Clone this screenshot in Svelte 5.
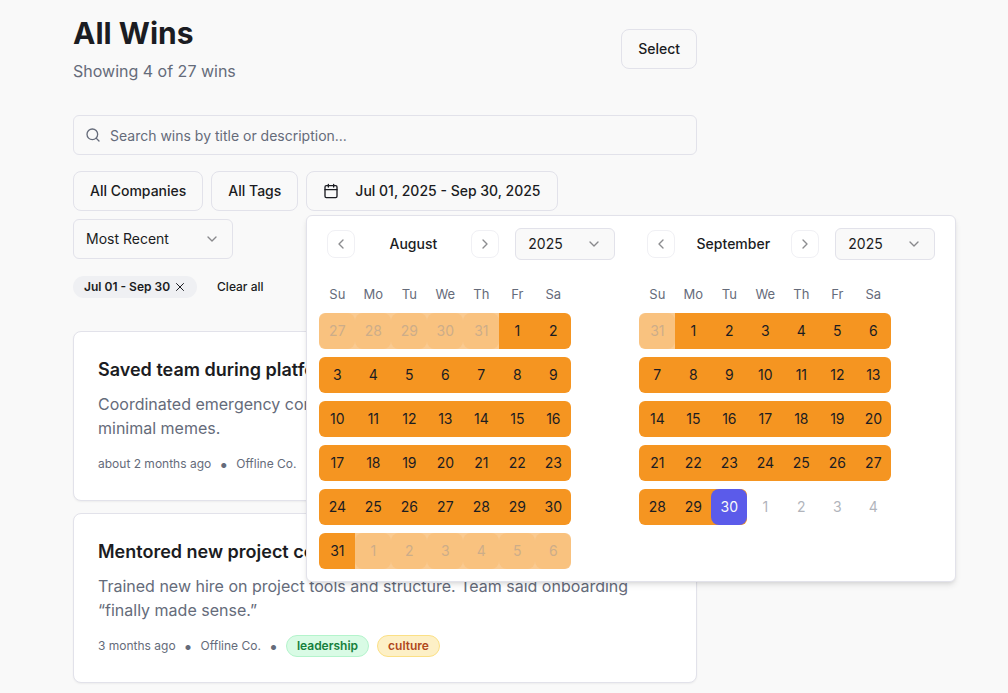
<script>
  const weekdays = ["Su", "Mo", "Tu", "We", "Th", "Fr", "Sa"];
  const sortOptions = ["Most Recent", "Oldest First", "By Company"];
  const years = [2023, 2024, 2025];

  const rangeStart = new Date(2025, 6, 1);
  const rangeEnd = new Date(2025, 8, 30);

  let search = $state("");
  let sort = $state("Most Recent");
  let months = $state([
    { name: "August", index: 7, year: 2025 },
    { name: "September", index: 8, year: 2025 },
  ]);

  const wins = [
    {
      title: "Saved team during platform outage",
      description:
        "Coordinated emergency comms and kept everyone on the track with minimal memes.",
      date: "about 2 months ago",
      company: "Offline Co.",
      tags: [],
    },
    {
      title: "Mentored new project coordinator",
      description:
        "Trained new hire on project tools and structure. Team said onboarding “finally made sense.”",
      date: "3 months ago",
      company: "Offline Co.",
      tags: [
        { label: "leadership", color: "green" },
        { label: "culture", color: "amber" },
      ],
    },
  ];

  function buildWeeks(year, month) {
    const first = new Date(year, month, 1);
    const lastDay = new Date(year, month + 1, 0).getDate();
    const offset = first.getDay();
    const rows = Math.ceil((offset + lastDay) / 7);
    return Array.from({ length: rows }, (_, r) =>
      Array.from({ length: 7 }, (_, c) => {
        const date = new Date(year, month, 1 - offset + r * 7 + c);
        return {
          day: date.getDate(),
          outside: date.getMonth() !== month,
          selected: date >= rangeStart && date <= rangeEnd,
          end: date.getTime() === rangeEnd.getTime(),
        };
      })
    );
  }
</script>

{#snippet chevronDown()}
  <svg class="icon chevron" viewBox="0 0 24 24" aria-hidden="true"><path d="m6 9 6 6 6-6" /></svg>
{/snippet}

<main class="page">
  <header class="header">
    <div>
      <h1>All Wins</h1>
      <p class="subtitle">Showing 4 of 27 wins</p>
    </div>
    <button class="btn" type="button">Select</button>
  </header>

  <label class="search">
    <svg class="icon" viewBox="0 0 24 24" aria-hidden="true">
      <circle cx="11" cy="11" r="8" />
      <path d="m21 21-4.3-4.3" />
    </svg>
    <input
      type="text"
      aria-label="Search wins"
      placeholder="Search wins by title or description..."
      bind:value={search}
    />
  </label>

  <div class="filters">
    <button class="btn" type="button">All Companies</button>
    <button class="btn" type="button">All Tags</button>
    <div class="date-filter">
      <button class="btn date-btn" type="button" aria-expanded="true">
        <svg class="icon" viewBox="0 0 24 24" aria-hidden="true">
          <path d="M8 2v4M16 2v4M3 10h18" />
          <rect width="18" height="18" x="3" y="4" rx="2" />
        </svg>
        Jul 01, 2025 - Sep 30, 2025
      </button>

      <div class="popover" role="dialog" aria-label="Date range">
        {#each months as month}
          <div class="month">
            <div class="caption">
              <button class="nav" type="button" aria-label="Previous month">
                <svg class="icon" viewBox="0 0 24 24" aria-hidden="true"><path d="m15 18-6-6 6-6" /></svg>
              </button>
              <span class="month-name">{month.name}</span>
              <button class="nav" type="button" aria-label="Next month">
                <svg class="icon" viewBox="0 0 24 24" aria-hidden="true"><path d="m9 18 6-6-6-6" /></svg>
              </button>
              <div class="select year">
                <select aria-label="Year for {month.name}" bind:value={month.year}>
                  {#each years as year}
                    <option value={year}>{year}</option>
                  {/each}
                </select>
                {@render chevronDown()}
              </div>
            </div>

            <table>
              <thead>
                <tr>
                  {#each weekdays as weekday}
                    <th scope="col">{weekday}</th>
                  {/each}
                </tr>
              </thead>
              <tbody>
                {#each buildWeeks(month.year, month.index) as week}
                  <tr>
                    {#each week as cell}
                      <td
                        class:selected={cell.selected}
                        class:outside={cell.outside}
                        class:end={cell.end}
                      >
                        <button type="button">{cell.day}</button>
                      </td>
                    {/each}
                  </tr>
                {/each}
              </tbody>
            </table>
          </div>
        {/each}
      </div>
    </div>

    <div class="select sort">
      <select aria-label="Sort wins" bind:value={sort}>
        {#each sortOptions as option}
          <option>{option}</option>
        {/each}
      </select>
      {@render chevronDown()}
    </div>
  </div>

  <div class="active-filters">
    <span class="chip">
      Jul 01 - Sep 30
      <button type="button" aria-label="Remove date filter">
        <svg class="icon" viewBox="0 0 24 24" aria-hidden="true"><path d="M19 5 5 19M5 5l14 14" /></svg>
      </button>
    </span>
    <button class="clear" type="button">Clear all</button>
  </div>

  <section class="wins">
    {#each wins as win}
      <article class="card">
        <h2>{win.title}</h2>
        <p class="description">{win.description}</p>
        <div class="meta">
          <span>{win.date}</span>
          <span class="dot">•</span>
          <span>{win.company}</span>
          {#if win.tags.length}
            <span class="dot">•</span>
            {#each win.tags as tag}
              <span class="tag {tag.color}">{tag.label}</span>
            {/each}
          {/if}
        </div>
      </article>
    {/each}
  </section>
</main>

<style>
  :global(body) {
    background: #f9f9f9;
    color: #1b1c22;
    font-family: Inter, "Liberation Sans", sans-serif;
    font-size: 14px;
    line-height: 20px;
  }

  * {
    box-sizing: border-box;
  }

  h1,
  h2,
  p {
    margin: 0;
  }

  button,
  input,
  select {
    margin: 0;
    padding: 0;
    border: 0;
    background: none;
    color: inherit;
    font: inherit;
  }

  .icon {
    width: 16px;
    height: 16px;
    flex: none;
    fill: none;
    stroke: currentColor;
    stroke-width: 2;
    stroke-linecap: round;
    stroke-linejoin: round;
  }

  .page {
    max-width: 624px;
    margin-left: 73px;
    padding: 15px 0 10px;
  }

  .header {
    display: flex;
    align-items: center;
    justify-content: space-between;
    margin-bottom: 32px;
  }

  h1 {
    font-size: 30px;
    line-height: 36px;
    font-weight: 700;
  }

  .subtitle {
    margin-top: 8px;
    font-size: 16px;
    line-height: 24px;
    color: #656b7a;
  }

  .btn {
    display: inline-flex;
    align-items: center;
    height: 40px;
    padding: 0 16px;
    border: 1px solid #e2e2ea;
    border-radius: 8px;
    background: #f9f9f9;
    font-weight: 500;
    white-space: nowrap;
  }

  .search {
    display: flex;
    align-items: center;
    gap: 9px;
    height: 40px;
    padding: 0 11px;
    border: 1px solid #e2e2ea;
    border-radius: 6px;
    color: #656b7a;
  }

  .search input {
    flex: 1;
    min-width: 0;
    height: 100%;
    outline: none;
  }

  .search input::placeholder {
    color: #656b7a;
    opacity: 1;
  }

  .filters {
    display: flex;
    flex-wrap: wrap;
    gap: 8px;
    margin-top: 16px;
  }

  .date-filter {
    position: relative;
  }

  .date-btn {
    gap: 16px;
  }

  .select {
    display: grid;
    align-items: center;
  }

  .select select {
    grid-area: 1 / 1;
    width: 100%;
    height: 100%;
    padding: 0 12px;
    border: 1px solid #e2e2ea;
    border-radius: 6px;
    background: #f9f9f9;
    appearance: none;
  }

  .chevron {
    grid-area: 1 / 1;
    justify-self: end;
    margin-right: 13px;
    opacity: 0.5;
    pointer-events: none;
  }

  .sort {
    width: 160px;
    height: 40px;
  }

  .year {
    width: 100px;
    height: 32px;
    margin-left: 16px;
  }

  .popover {
    position: absolute;
    top: calc(100% + 4px);
    left: 0;
    z-index: 10;
    display: flex;
    gap: 16px;
    padding: 12px;
    border: 1px solid #e2e2ea;
    border-radius: 6px;
    background: #fff;
    box-shadow:
      0 4px 6px -1px rgba(0, 0, 0, 0.1),
      0 2px 4px -2px rgba(0, 0, 0, 0.1);
  }

  .month {
    width: 304px;
  }

  .caption {
    display: flex;
    align-items: center;
    padding: 0 8px;
  }

  .month-name {
    flex: 1;
    text-align: center;
    font-weight: 500;
  }

  .nav {
    display: grid;
    place-items: center;
    width: 28px;
    height: 28px;
    border: 1px solid #e2e2ea;
    border-radius: 8px;
    opacity: 0.5;
  }

  table {
    display: block;
    margin-top: 24px;
  }

  thead,
  tbody {
    display: block;
  }

  tr {
    display: flex;
  }

  tbody tr {
    margin-top: 8px;
  }

  th {
    width: 36px;
    padding: 0;
    font-size: 13px;
    line-height: 21px;
    font-weight: 400;
    text-align: center;
    color: #656b7a;
  }

  td {
    width: 36px;
    height: 36px;
    padding: 0;
  }

  td button {
    display: block;
    width: 36px;
    height: 36px;
    border-radius: 8px;
    text-align: center;
  }

  td.selected {
    background: #f59521;
  }

  td.selected:first-child {
    border-radius: 6px 0 0 6px;
  }

  td.selected:last-child,
  td.end {
    border-radius: 0 6px 6px 0;
  }

  td.end button {
    background: #5b5bea;
    color: #f9f9f9;
  }

  td.outside button {
    color: #656b7a;
    opacity: 0.5;
  }

  td.outside.selected {
    background: rgba(245, 149, 33, 0.5);
  }

  td.outside.selected button {
    background: rgba(245, 149, 33, 0.5);
    opacity: 0.3;
  }

  .active-filters {
    display: flex;
    align-items: center;
    gap: 8px;
    margin-top: 12px;
    font-size: 12px;
    line-height: 16px;
  }

  .chip {
    display: inline-flex;
    align-items: center;
    gap: 4px;
    height: 22px;
    padding: 0 11px;
    border-radius: 11px;
    background: #eff0f3;
    font-weight: 600;
  }

  .chip button {
    display: flex;
  }

  .chip .icon {
    width: 12px;
    height: 12px;
  }

  .clear {
    height: 32px;
    padding: 0 12px;
    font-weight: 500;
  }

  .wins {
    display: grid;
    gap: 12px;
    margin-top: 28px;
  }

  .card {
    padding: 24px;
    border: 1px solid #e2e2ea;
    border-radius: 8px;
    background: #fff;
    box-shadow: 0 1px 2px rgba(0, 0, 0, 0.05);
  }

  .card h2 {
    font-size: 18px;
    line-height: 28px;
    font-weight: 600;
  }

  .description {
    margin-top: 8px;
    font-size: 16px;
    line-height: 24px;
    color: #656b7a;
  }

  .meta {
    display: flex;
    align-items: center;
    gap: 8px;
    height: 24px;
    margin-top: 12px;
    font-size: 12px;
    line-height: 16px;
    color: #656b7a;
  }

  .dot {
    font-size: 16px;
  }

  .tag {
    padding: 2px 10px;
    border: 1px solid;
    border-radius: 11px;
    font-weight: 600;
  }

  .green {
    border-color: #b4f4cc;
    background: #d9fbe5;
    color: #15803d;
  }

  .amber {
    border-color: #fbe085;
    background: #fdf0c6;
    color: #b0481c;
  }
</style>
